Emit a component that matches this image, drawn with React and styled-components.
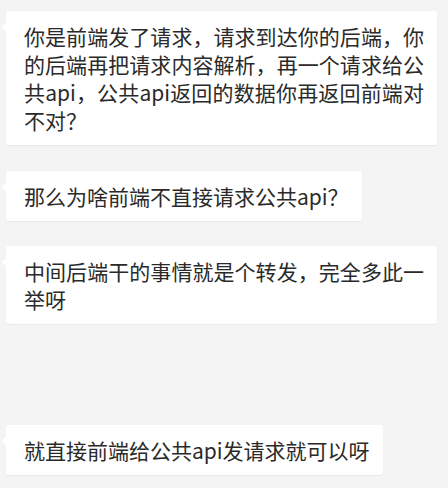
import styled, { createGlobalStyle } from 'styled-components'

const messages = [
    { id: 1, text: '你是前端发了请求，请求到达你的后端，你的后端再把请求内容解析，再一个请求给公共api，公共api返回的数据你再返回前端对不对？', gap: 26 },
    { id: 2, text: '那么为啥前端不直接请求公共api？', gap: 25 },
    { id: 3, text: '中间后端干的事情就是个转发，完全多此一举呀', gap: 101 },
    { id: 4, text: '就直接前端给公共api发请求就可以呀', gap: 0 },
]

export default function App() {
    return (
        <>
            <GlobalStyle />
            <ChatList>
                {messages.map((m) => (
                    <Row key={m.id} $gap={m.gap}>
                        <Bubble>{m.text}</Bubble>
                    </Row>
                ))}
            </ChatList>
        </>
    )
}

const GlobalStyle = createGlobalStyle`
    html, body {
        margin: 0;
        padding: 0;
        background-color: #f4f4f4;
    }
    body {
        width: 448px;
        height: 488px;
        overflow: hidden;
        font-family: "Noto Sans CJK SC", "Noto Sans", sans-serif;
    }
`

const ChatList = styled.div`
    display: flex;
    flex-direction: column;
    padding: 11px 11px 0 6px;
`

const Row = styled.div`
    display: flex;
    justify-content: flex-start;
    margin-bottom: ${(p) => p.$gap}px;
`

const Bubble = styled.div`
    position: relative;
    max-width: 100%;
    box-sizing: border-box;
    padding: 11px 13px 11px 18px;
    background-color: #ffffff;
    border-radius: 3px;
    box-shadow: 0 1px 1px rgba(0, 0, 0, 0.05);
    color: #2a2a2a;
    font-size: 21px;
    line-height: 28px;
    text-align: justify;
    word-break: break-all;

    &::before {
        content: '';
        position: absolute;
        left: -5px;
        top: 12px;
        border-top: 4px solid transparent;
        border-bottom: 4px solid transparent;
        border-right: 5px solid #ffffff;
    }
`
